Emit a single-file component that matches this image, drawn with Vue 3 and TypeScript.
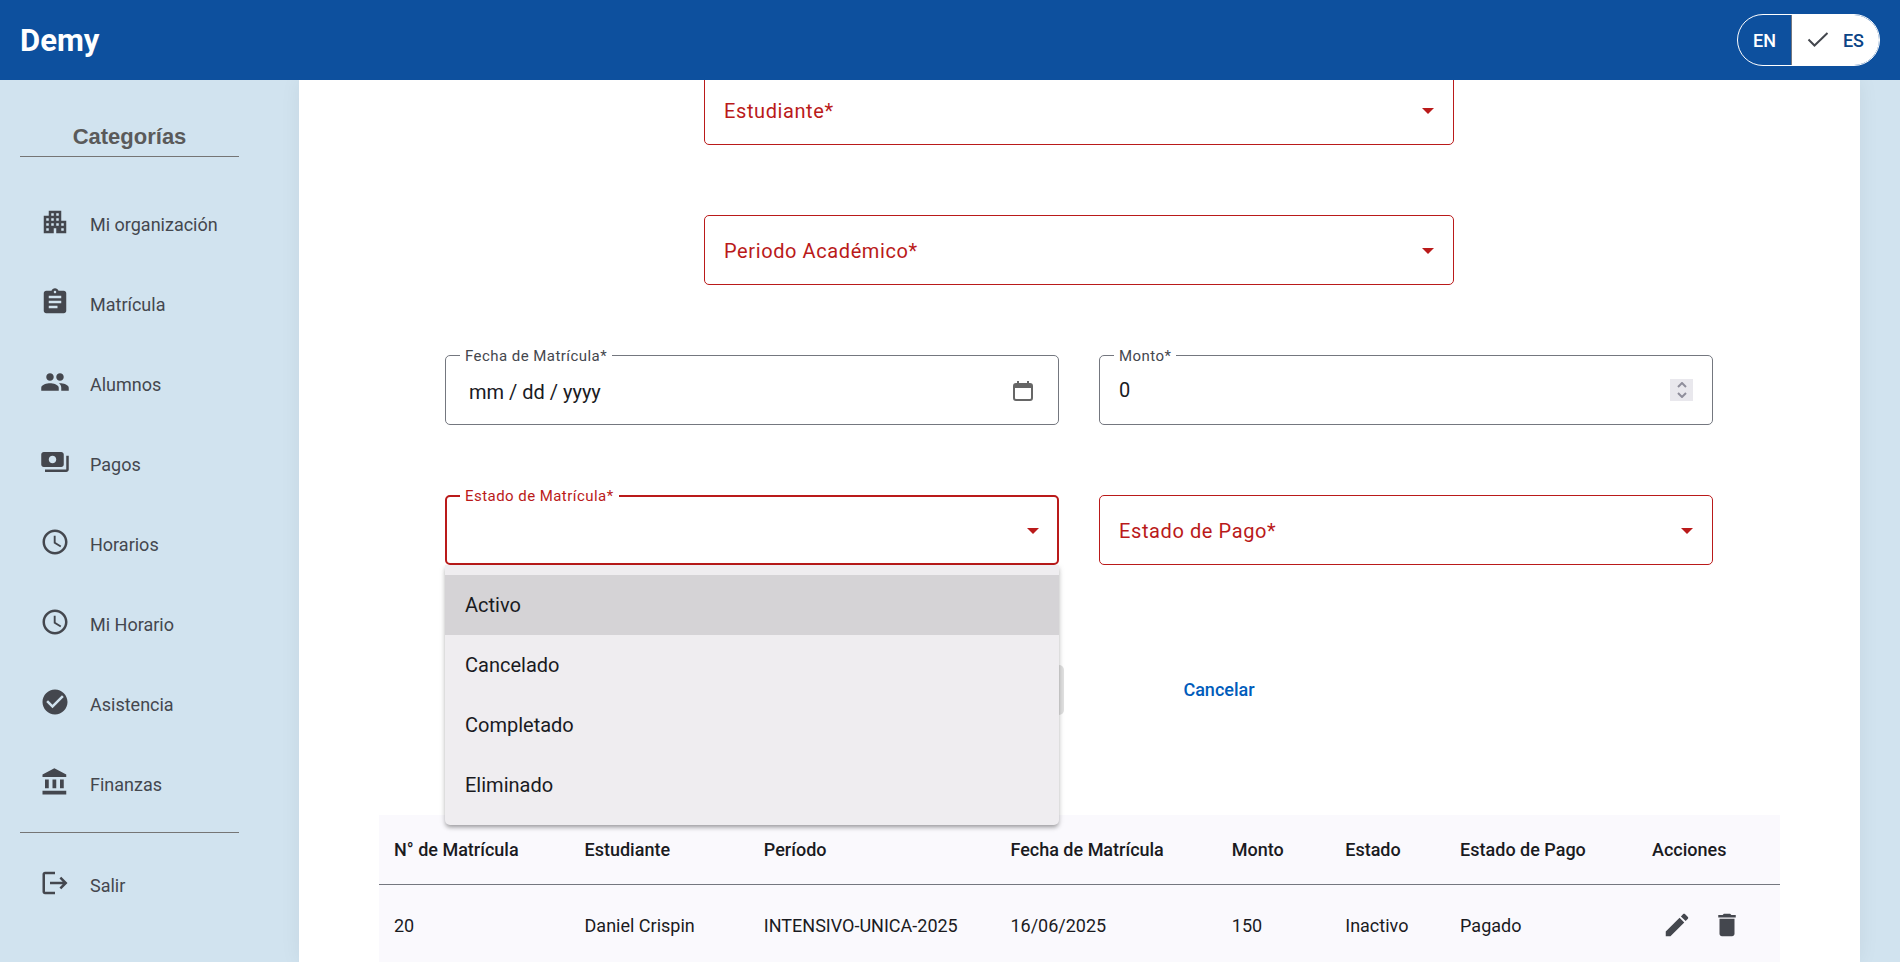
<script setup lang="ts">
import { ref } from 'vue'

interface MenuItem {
  label: string
  icon: string
}

interface Column {
  title: string
  width: string
}

interface Enrollment {
  id: number
  student: string
  period: string
  date: string
  amount: number
  status: string
  payment: string
}

const clock =
  'M11.99 2C6.47 2 2 6.48 2 12s4.47 10 9.99 10C17.52 22 22 17.52 22 12S17.52 2 11.99 2zM12 20c-4.42 0-8-3.58-8-8s3.58-8 8-8 8 3.58 8 8-3.58 8-8 8zm.5-13H11v6l5.25 3.15.75-1.23-4.5-2.67z'
const logout =
  'M17 7l-1.41 1.41L18.17 11H8v2h10.17l-2.58 2.58L17 17l5-5zM4 5h8V3H4c-1.1 0-2 .9-2 2v14c0 1.1.9 2 2 2h8v-2H4V5z'

const menu: MenuItem[] = [
  {
    label: 'Mi organización',
    icon: 'M17 11V3H7v4H3v14h8v-4h2v4h8V11h-4zM7 19H5v-2h2v2zm0-4H5v-2h2v2zm0-4H5V9h2v2zm4 4H9v-2h2v2zm0-4H9V9h2v2zm0-4H9V5h2v2zm4 8h-2v-2h2v2zm0-4h-2V9h2v2zm0-4h-2V5h2v2zm4 12h-2v-2h2v2zm0-4h-2v-2h2v2z',
  },
  {
    label: 'Matrícula',
    icon: 'M19 3h-4.18C14.4 1.84 13.3 1 12 1c-1.3 0-2.4.84-2.82 2H5c-1.1 0-2 .9-2 2v14c0 1.1.9 2 2 2h14c1.1 0 2-.9 2-2V5c0-1.1-.9-2-2-2zm-7 0c.55 0 1 .45 1 1s-.45 1-1 1-1-.45-1-1 .45-1 1-1zm2 14H7v-2h7v2zm3-4H7v-2h10v2zm0-4H7V7h10v2z',
  },
  {
    label: 'Alumnos',
    icon: 'M16 11c1.66 0 2.99-1.34 2.99-3S17.66 5 16 5c-1.66 0-3 1.34-3 3s1.34 3 3 3zm-8 0c1.66 0 2.99-1.34 2.99-3S9.66 5 8 5C6.34 5 5 6.34 5 8s1.34 3 3 3zm0 2c-2.33 0-7 1.17-7 3.5V19h14v-2.5c0-2.33-4.67-3.5-7-3.5zm8 0c-.29 0-.62.02-.97.05 1.16.84 1.97 1.97 1.97 3.45V19h6v-2.5c0-2.33-4.67-3.5-7-3.5z',
  },
  {
    label: 'Pagos',
    icon: 'M19 14V6c0-1.1-.9-2-2-2H3c-1.1 0-2 .9-2 2v8c0 1.1.9 2 2 2h14c1.1 0 2-.9 2-2zm-9-1c-1.66 0-3-1.34-3-3s1.34-3 3-3 3 1.34 3 3-1.34 3-3 3zm13-6v11c0 1.1-.9 2-2 2H4v-2h17V7h2z',
  },
  { label: 'Horarios', icon: clock },
  { label: 'Mi Horario', icon: clock },
  {
    label: 'Asistencia',
    icon: 'M12 2C6.48 2 2 6.48 2 12s4.48 10 10 10 10-4.48 10-10S17.52 2 12 2zm-2 15l-5-5 1.41-1.41L10 14.17l7.59-7.59L19 8l-9 9z',
  },
  {
    label: 'Finanzas',
    icon: 'M4 10v7h3v-7H4zm6 0v7h3v-7h-3zM2 22h19v-3H2v3zm14-12v7h3v-7h-3zm-4.5-9L2 6v2h19V6l-9.5-5z',
  },
]

const statuses = ['Activo', 'Cancelado', 'Completado', 'Eliminado']
const columns: Column[] = [
  { title: 'N° de Matrícula', width: '13.6%' },
  { title: 'Estudiante', width: '12.8%' },
  { title: 'Período', width: '17.6%' },
  { title: 'Fecha de Matrícula', width: '15.8%' },
  { title: 'Monto', width: '8.1%' },
  { title: 'Estado', width: '8.2%' },
  { title: 'Estado de Pago', width: '13.7%' },
  { title: 'Acciones', width: '10.2%' },
]
const rows: Enrollment[] = [
  { id: 20, student: 'Daniel Crispin', period: 'INTENSIVO-UNICA-2025', date: '16/06/2025', amount: 150, status: 'Inactivo', payment: 'Pagado' },
]

const lang = ref<'EN' | 'ES'>('ES')
const date = ref('')
const amount = ref(0)
const status = ref('')
const statusOpen = ref(true)
const activeOption = ref(0)

function choose(option: string, index: number) {
  status.value = option
  activeOption.value = index
  statusOpen.value = false
}
</script>

<template>
  <div class="shell">
    <header class="topbar">
      <span class="brand">Demy</span>
      <div class="lang" role="group" aria-label="Idioma">
        <button type="button" :class="{ on: lang === 'EN' }" @click="lang = 'EN'">
          <svg v-if="lang === 'EN'" class="tick" viewBox="0 0 22 16"><path d="M1.500 7.500L7.500 13.500L20.500 1" /></svg>EN
        </button>
        <button type="button" :class="{ on: lang === 'ES' }" @click="lang = 'ES'">
          <svg v-if="lang === 'ES'" class="tick" viewBox="0 0 22 16"><path d="M1.500 7.500L7.500 13.500L20.500 1" /></svg>ES
        </button>
      </div>
    </header>

    <div class="body">
      <nav class="sidebar" aria-label="Categorías">
        <h2>Categorías</h2>
        <ul class="menu">
          <li v-for="item in menu" :key="item.label">
            <a href="#">
              <svg class="icon" viewBox="0 0 24 24"><path :d="item.icon" /></svg>
              <span>{{ item.label }}</span>
            </a>
          </li>
        </ul>
        <a class="exit" href="#">
          <svg class="icon" viewBox="0 0 24 24"><path :d="logout" /></svg>
          <span>Salir</span>
        </a>
      </nav>

      <main class="card">
        <form class="form" @submit.prevent>
          <div class="field narrow error">
            <select id="student"><option value=""></option></select>
            <label for="student">Estudiante*</label>
            <svg class="caret" viewBox="0 0 12 6"><path d="M0 0h12L6 6z" /></svg>
          </div>
          <div class="field narrow error">
            <select id="period"><option value=""></option></select>
            <label for="period">Periodo Académico*</label>
            <svg class="caret" viewBox="0 0 12 6"><path d="M0 0h12L6 6z" /></svg>
          </div>

          <div class="pair">
            <div class="field floating">
              <input id="date" v-model="date" class="date" type="text" placeholder="mm / dd / yyyy" />
              <label for="date">Fecha de Matrícula*</label>
              <button class="calendar" type="button" aria-label="Abrir calendario">
                <svg viewBox="0 0 20 20">
                  <rect x="1" y="3" width="18" height="16" rx="2" fill="none" stroke="currentColor" stroke-width="2" />
                  <path d="M1 3h18v4H1zM4 0h2v3H4zM14 0h2v3h-2z" fill="currentColor" />
                </svg>
              </button>
            </div>
            <div class="field floating">
              <input id="amount" v-model.number="amount" type="number" />
              <label for="amount">Monto*</label>
              <div class="spinner">
                <button type="button" aria-label="Aumentar" @click="amount++">
                  <svg viewBox="0 0 10 6"><path d="M1 5l4-4 4 4" /></svg>
                </button>
                <button type="button" aria-label="Disminuir" @click="amount--">
                  <svg viewBox="0 0 10 6"><path d="M1 1l4 4 4-4" /></svg>
                </button>
              </div>
            </div>
          </div>

          <div class="pair">
            <div class="field error floating focused">
              <select id="status" v-model="status" @mousedown.prevent="statusOpen = !statusOpen">
                <option value=""></option>
                <option v-for="s in statuses" :key="s" :value="s">{{ s }}</option>
              </select>
              <label for="status">Estado de Matrícula*</label>
              <svg class="caret" viewBox="0 0 12 6"><path d="M0 0h12L6 6z" /></svg>
              <ul v-if="statusOpen" class="panel" role="listbox" aria-label="Estado de Matrícula">
                <li
                  v-for="(s, i) in statuses"
                  :key="s"
                  role="option"
                  :aria-selected="status === s"
                  :class="{ active: i === activeOption }"
                  @click="choose(s, i)"
                >
                  {{ s }}
                </li>
              </ul>
            </div>
            <div class="field error">
              <select id="payment"><option value=""></option></select>
              <label for="payment">Estado de Pago*</label>
              <svg class="caret" viewBox="0 0 12 6"><path d="M0 0h12L6 6z" /></svg>
            </div>
          </div>

          <div class="actions">
            <button class="save" type="submit" disabled>Guardar</button>
            <button class="cancel" type="button">Cancelar</button>
          </div>
        </form>

        <table>
          <colgroup>
            <col v-for="c in columns" :key="c.title" :style="{ width: c.width }" />
          </colgroup>
          <thead>
            <tr>
              <th v-for="c in columns" :key="c.title" scope="col">{{ c.title }}</th>
            </tr>
          </thead>
          <tbody>
            <tr v-for="r in rows" :key="r.id">
              <td>{{ r.id }}</td>
              <td>{{ r.student }}</td>
              <td>{{ r.period }}</td>
              <td>{{ r.date }}</td>
              <td>{{ r.amount }}</td>
              <td>{{ r.status }}</td>
              <td>{{ r.payment }}</td>
              <td>
                <div class="row-actions">
                  <button type="button" aria-label="Editar">
                    <svg class="icon" viewBox="0 0 24 24"><path d="M3 17.250V21h3.750L17.810 9.940l-3.750-3.750L3 17.250zM20.710 7.040c.39-.39.39-1.020 0-1.410l-2.340-2.340c-.39-.39-1.020-.39-1.410 0l-1.830 1.830 3.750 3.750 1.830-1.830z" /></svg>
                  </button>
                  <button type="button" aria-label="Eliminar">
                    <svg class="icon" viewBox="0 0 24 24"><path d="M6 19c0 1.100.9 2 2 2h8c1.100 0 2-.9 2-2V7H6v12zM19 4h-3.500l-1-1h-5l-1 1H5v2h14V4z" /></svg>
                  </button>
                </div>
              </td>
            </tr>
          </tbody>
        </table>
      </main>
    </div>
  </div>
</template>

<style>
body {
  margin: 0;
  background: #d1e3ef;
}
</style>

<style scoped>
.shell,
.shell * {
  box-sizing: border-box;
}
.shell {
  display: flex;
  flex-direction: column;
  height: 100vh;
  overflow: hidden;
  font-family: Roboto, 'Liberation Sans', sans-serif;
  font-size: 18px;
  color: #1a1b1f;
}
button,
input,
select {
  font: inherit;
  color: inherit;
  border: 0;
  padding: 0;
  background: none;
  outline: 0;
}
button {
  cursor: pointer;
}
a {
  color: inherit;
  text-decoration: none;
}
ul {
  list-style: none;
  margin: 0;
  padding: 0;
}
svg {
  display: block;
  fill: currentColor;
}

.topbar {
  display: flex;
  flex: none;
  align-items: center;
  justify-content: space-between;
  height: 80px;
  padding: 0 20px;
  background: #0d509e;
  color: #fff;
  z-index: 2;
}
.brand {
  font-size: 31px;
  font-weight: 700;
}
.lang {
  display: flex;
  height: 52px;
  border: 1px solid #fff;
  border-radius: 26px;
  overflow: hidden;
}
.lang button {
  display: flex;
  align-items: center;
  gap: 14px;
  padding: 0 15px;
  font-weight: 500;
}
.lang button + button {
  border-left: 1px solid #74777f;
}
.lang .on {
  background: #fff;
  color: #0b4486;
}
.tick {
  width: 22px;
  height: 16px;
  fill: none;
  stroke: #44474e;
  stroke-width: 2;
}

.body {
  display: flex;
  flex: 1;
  min-height: 0;
}
.sidebar {
  width: 299px;
  flex: none;
  padding: 43px 60px 0 20px;
  color: #44474e;
}
.sidebar h2 {
  margin: 0 0 27px;
  padding-bottom: 5px;
  border-bottom: 1px solid #757575;
  font-family: 'Liberation Sans', Arial, sans-serif;
  font-size: 22px;
  line-height: 28px;
  font-weight: 700;
  color: #5a5a5a;
  text-align: center;
}
.menu {
  padding-bottom: 8px;
  border-bottom: 1px solid #757575;
}
.sidebar a {
  display: flex;
  align-items: center;
  gap: 20px;
  height: 80px;
  padding-left: 20px;
}
.sidebar .exit {
  height: 104px;
}
.icon {
  width: 30px;
  height: 30px;
}
.sidebar .icon {
  margin-bottom: 4px;
}

.card {
  flex: 1;
  min-width: 0;
  margin-right: 40px;
  padding: 0 80px;
  background: #fff;
  box-shadow: 0 0 20px rgba(0, 0, 0, 0.06);
}
.form {
  display: flex;
  flex-direction: column;
  gap: 70px;
  margin-top: -5px;
  padding: 0 67px 0 66px;
}
.pair {
  display: grid;
  grid-template-columns: 1fr 1fr;
  gap: 40px;
}
.field {
  position: relative;
  display: flex;
  align-items: center;
  height: 70px;
  padding: 0 19px;
  border: 1px solid #74777f;
  border-radius: 5px;
  font-size: 20px;
}
.narrow {
  width: 100%;
  max-width: 750px;
  align-self: center;
}
.field select,
.field input {
  flex: 1;
  min-width: 0;
  height: 100%;
  appearance: none;
}
.field input[type='number'] {
  appearance: textfield;
}
.field input::-webkit-inner-spin-button {
  display: none;
}
.field .date {
  padding: 3px 4px 0;
}
.date::placeholder {
  color: inherit;
  opacity: 1;
}
.field label {
  position: absolute;
  left: 19px;
  top: 23px;
  line-height: 24px;
  letter-spacing: 0.03em;
  pointer-events: none;
}
.field.floating label {
  left: 14px;
  top: -10px;
  padding: 0 5px;
  font-size: 15px;
  line-height: 20px;
  background: #fff;
  color: #44474e;
}
.field.error,
.field.error label {
  border-color: #ba1a1a;
  color: #ba1a1a;
}
.field.focused {
  border-width: 2px;
  padding: 0 18px;
}
.field.focused label {
  left: 13px;
  top: -11px;
}
.caret {
  width: 12px;
  height: 6px;
  margin-top: 2px;
}
.calendar {
  width: 20px;
  margin: 2px 6px 0 0;
  color: #666;
}
.spinner {
  display: flex;
  flex-direction: column;
  align-items: center;
  justify-content: center;
  gap: 4px;
  width: 23px;
  height: 22px;
  background: #e9e8ed;
}
.spinner svg {
  width: 10px;
  height: 6px;
  fill: none;
  stroke: #8f8e9b;
  stroke-width: 2;
}
.panel {
  position: absolute;
  top: 100%;
  left: -2px;
  right: -2px;
  z-index: 1;
  margin-top: 2px;
  padding: 10px 0;
  border-radius: 0 0 5px 5px;
  background: #efedf0;
  color: #1a1b1f;
  box-shadow: 0 3px 4px -1px rgba(0, 0, 0, 0.3), 0 2px 6px rgba(0, 0, 0, 0.14);
}
.panel li {
  padding: 0 20px;
  line-height: 60px;
  cursor: pointer;
}
.panel .active {
  background: #d5d3d6;
}

.actions {
  display: flex;
  justify-content: center;
  gap: 104px;
  margin: 30px 0 100px;
}
.actions button {
  height: 50px;
  padding: 0 15px 2px;
  border-radius: 5px;
  font-weight: 500;
}
.actions .save {
  width: 176px;
  background: #e0e0e0;
  color: #999;
}
.actions .cancel {
  color: #005cbb;
}

table {
  width: 100%;
  border-collapse: separate;
  border-spacing: 0;
  background: #faf9fd;
}
th,
td {
  padding: 0 15px;
  text-align: left;
  white-space: nowrap;
}
th {
  height: 70px;
  border-bottom: 1px solid #74777f;
  font-weight: 500;
}
td {
  height: 80px;
}
.row-actions {
  display: flex;
  color: #44474e;
}
.row-actions button {
  display: flex;
  align-items: center;
  justify-content: center;
  width: 50px;
  height: 50px;
}
</style>
